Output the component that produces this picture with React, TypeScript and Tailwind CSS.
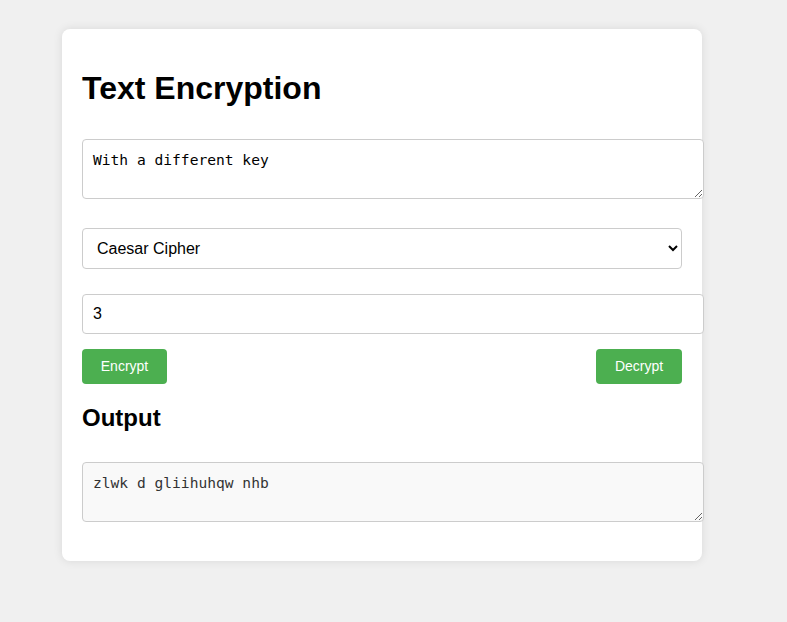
import { useState } from 'react';

export default function App() {
  const [text, setText] = useState('With a different key');
  const [method, setMethod] = useState('caesar');
  const [key, setKey] = useState('3');

  return (
    <div className="min-h-[622px] w-full bg-[#f0f0f0] pt-[29px] pl-[62px] font-['Liberation_Sans',Arial,sans-serif]">
      <div className="flex w-[640px] flex-col rounded-lg bg-white px-5 pt-[41px] pb-[39px] shadow-[0_0_10px_rgba(0,0,0,0.1)]">
        <h1 className="text-[32px] font-bold leading-[37px] text-black">Text Encryption</h1>

        <textarea
          value={text}
          onChange={(e) => setText(e.target.value)}
          className="mt-[32px] h-[60px] w-[622px] rounded border border-[#ccc] bg-white px-[10px] py-[10px] font-['DejaVu_Sans_Mono',monospace] text-[14.6px] leading-[20px] text-black"
        />

        <select
          value={method}
          onChange={(e) => setMethod(e.target.value)}
          className="mt-[29px] h-[41px] w-[600px] rounded border border-[#ccc] bg-white pl-[10px] pr-2 text-[16px] text-black"
        >
          <option value="caesar">Caesar Cipher</option>
          <option value="vigenere">Vigenère Cipher</option>
        </select>

        <input
          value={key}
          onChange={(e) => setKey(e.target.value)}
          className="mt-[25px] h-[40px] w-[622px] rounded border border-[#ccc] bg-white px-[10px] text-[16px] text-black"
        />

        <div className="mt-[15px] flex w-[600px] justify-between">
          <button className="h-[35px] w-[85px] rounded bg-[#4caf50] text-[14px] text-white">Encrypt</button>
          <button className="h-[35px] w-[86px] rounded bg-[#4caf50] text-[14px] text-white">Decrypt</button>
        </div>

        <h2 className="mt-[20px] text-[24px] font-bold leading-[28px] text-black">Output</h2>

        <textarea
          readOnly
          value="zlwk d gliihuhqw nhb"
          className="mt-[30px] h-[60px] w-[622px] rounded border border-[#ccc] bg-[#f9f9f9] px-[10px] py-[10px] font-['DejaVu_Sans_Mono',monospace] text-[14.6px] leading-[20px] text-[#333]"
        />
      </div>
    </div>
  );
}
